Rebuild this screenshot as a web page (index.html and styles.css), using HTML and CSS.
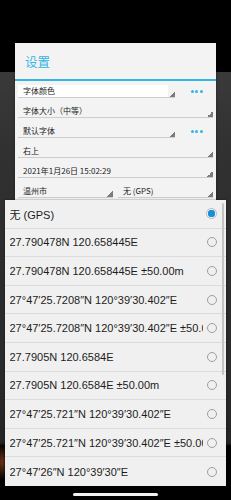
FILE: index.html
```html
<!DOCTYPE html>
<html lang="zh-CN">
<head>
<meta charset="utf-8">
<title>设置</title>
<link rel="stylesheet" href="styles.css">
</head>
<body>
<div class="screen">
  <div class="dialog">
    <div class="title">设置</div>
    <div class="rows">
      <div class="row">
        <div class="spinner short focused">字体颜色</div>
        <div class="dots"><i></i><i></i><i></i></div>
      </div>
      <div class="row">
        <div class="spinner">字体大小（中等）</div>
      </div>
      <div class="row">
        <div class="spinner short">默认字体</div>
        <div class="dots"><i></i><i></i><i></i></div>
      </div>
      <div class="row">
        <div class="spinner">右上</div>
      </div>
      <div class="row">
        <div class="spinner">2021年1月26日 15:02:29</div>
      </div>
      <div class="row split">
        <div class="spinner">温州市</div>
        <div class="spinner">无 (GPS)</div>
      </div>
    </div>
  </div>

  <div class="popup">
    <ul class="options">
      <li class="option"><span class="label">无 (GPS)</span><span class="radio on"></span></li>
      <li class="option"><span class="label">27.790478N 120.658445E</span><span class="radio"></span></li>
      <li class="option"><span class="label">27.790478N 120.658445E ±50.00m</span><span class="radio"></span></li>
      <li class="option"><span class="label">27°47′25.7208″N 120°39′30.402″E</span><span class="radio"></span></li>
      <li class="option"><span class="label">27°47′25.7208″N 120°39′30.402″E ±50.00m</span><span class="radio"></span></li>
      <li class="option"><span class="label">27.7905N 120.6584E</span><span class="radio"></span></li>
      <li class="option"><span class="label">27.7905N 120.6584E ±50.00m</span><span class="radio"></span></li>
      <li class="option"><span class="label">27°47′25.721″N 120°39′30.402″E</span><span class="radio"></span></li>
      <li class="option"><span class="label">27°47′25.721″N 120°39′30.402″E ±50.00m</span><span class="radio"></span></li>
      <li class="option last"><span class="label">27°47′26″N 120°39′30″E</span><span class="radio"></span></li>
    </ul>
    <div class="scrollbar"></div>
  </div>

  <div class="home"></div>
</div>
</body>
</html>
```

FILE: styles.css
```css
* { box-sizing: border-box; }

html, body {
  margin: 0;
  padding: 0;
  width: 231px;
  height: 500px;
  overflow: hidden;
  background: #000;
}

.screen {
  position: relative;
  width: 231px;
  height: 500px;
  overflow: hidden;
  font-family: "Liberation Sans", "Noto Sans CJK SC", sans-serif;
  background:
    radial-gradient(ellipse 8px 18px at 2px 462px, #6a3218 0%, rgba(106,50,24,0) 100%),
    linear-gradient(to bottom,
      #000 0px, #000 72px,
      #3a3a3a 72px, #323232 140px, #2c2c2c 260px, #2a2a2a 380px, #242424 443px,
      #000 446px, #000 500px);
}

/* ---------- settings dialog ---------- */
.dialog {
  margin: 43px 15px 0;
  width: 201px;
  height: 320px;
  background: #f3f3f3;
  box-shadow: 0 0 2px rgba(0,0,0,0.5);
}

.title {
  height: 38px;
  padding: 1px 0 0 10px;
  line-height: 36px;
  font-family: "Noto Sans CJK SC", sans-serif;
  font-size: 12.5px;
  color: #33b5e5;
  border-bottom: 2px solid #33b5e5;
}

.row {
  display: flex;
  align-items: flex-start;
  height: 20px;
  padding: 4px 3px 3px;
}

.row.split { gap: 5px; }

.spinner {
  flex: 1;
  height: 13px;
  padding-left: 5px;
  line-height: 12px;
  font-family: "Noto Sans CJK SC", sans-serif;
  font-size: 8px;
  color: #222;
  white-space: nowrap;
  overflow: hidden;
  border-bottom: 1px solid #cdcdcd;
  background:
    linear-gradient(to bottom right, rgba(0,0,0,0) 50%, #7c7c7c 50%) right bottom / 6px 6px no-repeat;
}

.spinner.short { flex: 0 0 157px; }

.spinner.focused {
  background:
    linear-gradient(to bottom right, rgba(0,0,0,0) 50%, #7c7c7c 50%) right bottom / 6px 6px no-repeat,
    linear-gradient(#fff, #fff) left top / calc(100% - 7px) 100% no-repeat;
}

.dots {
  display: flex;
  align-items: center;
  gap: 1.7px;
  height: 12px;
  margin-left: 15.7px;
}

.dots i {
  display: block;
  width: 3px;
  height: 3px;
  border-radius: 50%;
  background: #33b5e5;
}

/* ---------- popup list ---------- */
.popup {
  position: absolute;
  top: 200px;
  left: 5px;
  width: 221px;
  height: 286px;
  background: #f0f0f0;
  overflow: hidden;
  box-shadow: 0 0 2px rgba(0,0,0,0.45);
}

.options {
  list-style: none;
  margin: 0;
  padding: 0;
}

.option {
  display: flex;
  align-items: center;
  height: 28.6px;
  padding: 0 9px 0 4.5px;
  border-bottom: 1px solid #dcdcdc;
  font-size: 11px;
  color: #1c1c1c;
}

.option.last { border-bottom: none; }

.label {
  flex: 1;
  min-width: 0;
  overflow: hidden;
  white-space: nowrap;
}

.radio {
  flex: 0 0 10px;
  width: 10px;
  height: 10px;
  margin-left: 4px;
  border-radius: 50%;
  border: 1px solid #9e9e9e;
}

.radio.on {
  flex-basis: 11px;
  width: 11px;
  height: 11px;
  border-color: #b9b9b9;
  background: radial-gradient(circle closest-side, #1a8ed6 0, #1a8ed6 78%, #e9f3fa 86%, #f6f6f6 100%);
}

.scrollbar {
  position: absolute;
  top: 3px;
  right: 2px;
  width: 2px;
  height: 172px;
  border-radius: 1px;
  background: #c4c4c4;
}

/* ---------- system home indicator ---------- */
.home {
  position: absolute;
  left: 73px;
  top: 493px;
  width: 85px;
  height: 3px;
  border-radius: 2px;
  background: #f2f2f2;
}
```
